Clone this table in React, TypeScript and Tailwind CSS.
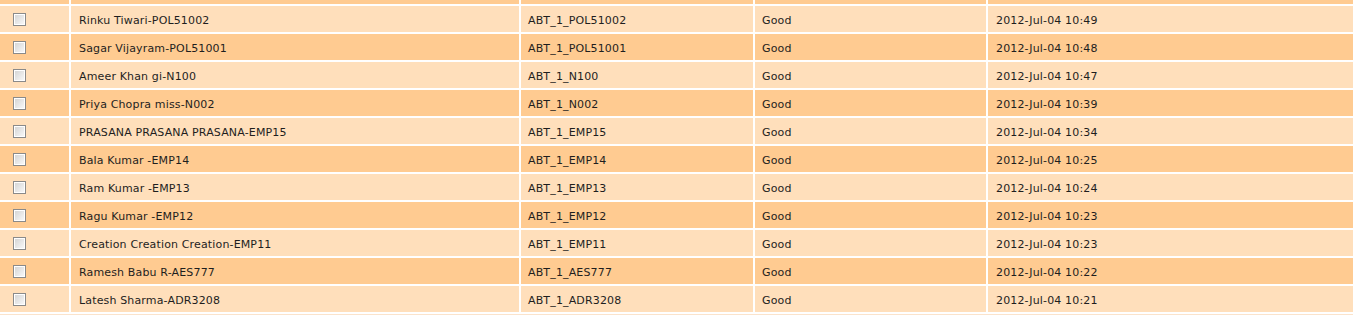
const rows = [
  ["Rinku Tiwari-POL51002", "ABT_1_POL51002", "Good", "2012-Jul-04 10:49"],
  ["Sagar Vijayram-POL51001", "ABT_1_POL51001", "Good", "2012-Jul-04 10:48"],
  ["Ameer Khan gi-N100", "ABT_1_N100", "Good", "2012-Jul-04 10:47"],
  ["Priya Chopra miss-N002", "ABT_1_N002", "Good", "2012-Jul-04 10:39"],
  ["PRASANA PRASANA PRASANA-EMP15", "ABT_1_EMP15", "Good", "2012-Jul-04 10:34"],
  ["Bala Kumar -EMP14", "ABT_1_EMP14", "Good", "2012-Jul-04 10:25"],
  ["Ram Kumar -EMP13", "ABT_1_EMP13", "Good", "2012-Jul-04 10:24"],
  ["Ragu Kumar -EMP12", "ABT_1_EMP12", "Good", "2012-Jul-04 10:23"],
  ["Creation Creation Creation-EMP11", "ABT_1_EMP11", "Good", "2012-Jul-04 10:23"],
  ["Ramesh Babu R-AES777", "ABT_1_AES777", "Good", "2012-Jul-04 10:22"],
  ["Latesh Sharma-ADR3208", "ABT_1_ADR3208", "Good", "2012-Jul-04 10:21"],
];

const cols = "grid grid-cols-[69px_448px_232px_231px_365px] gap-x-[2px]";

function Checkbox() {
  return (
    <div className="w-[13px] h-[13px] border border-[#8a8a8a] bg-white p-px">
      <div className="w-full h-full bg-gradient-to-br from-[#d6d6d6] to-[#f7f7f7]" />
    </div>
  );
}

export default function App() {
  return (
    <div
      className="w-[1356px] h-[318px] bg-white flex flex-col gap-[2px] text-[11px] text-[#1e1e1e]"
      style={{ fontFamily: '"DejaVu Sans", Verdana, sans-serif' }}
    >
      <div className={`${cols} h-[4px]`}>
        {[0, 1, 2, 3, 4].map((i) => (
          <div key={i} className="bg-[#ffcb91]" />
        ))}
      </div>
      {rows.map((r, i) => {
        const bg = i % 2 === 0 ? "bg-[#ffdfbb]" : "bg-[#ffcb91]";
        return (
          <div key={i} className={`${cols} h-[26px]`}>
            <div className={`${bg} flex items-center pl-[13px] pt-px`}>
              <Checkbox />
            </div>
            <div className={`${bg} flex items-center pl-[8px] pt-[4px] tracking-[0.15px]`}>{r[0]}</div>
            <div className={`${bg} flex items-center pl-[7px] pt-[4px] tracking-[0.15px]`}>{r[1]}</div>
            <div className={`${bg} flex items-center pl-[7px] pt-[4px] tracking-[0.15px]`}>{r[2]}</div>
            <div className={`${bg} flex items-center pl-[8px] pt-[4px] tracking-[0.15px]`}>{r[3]}</div>
          </div>
        );
      })}
      <div className="w-[1353px] h-[1px] bg-[#fbe3cb]" />
    </div>
  );
}
